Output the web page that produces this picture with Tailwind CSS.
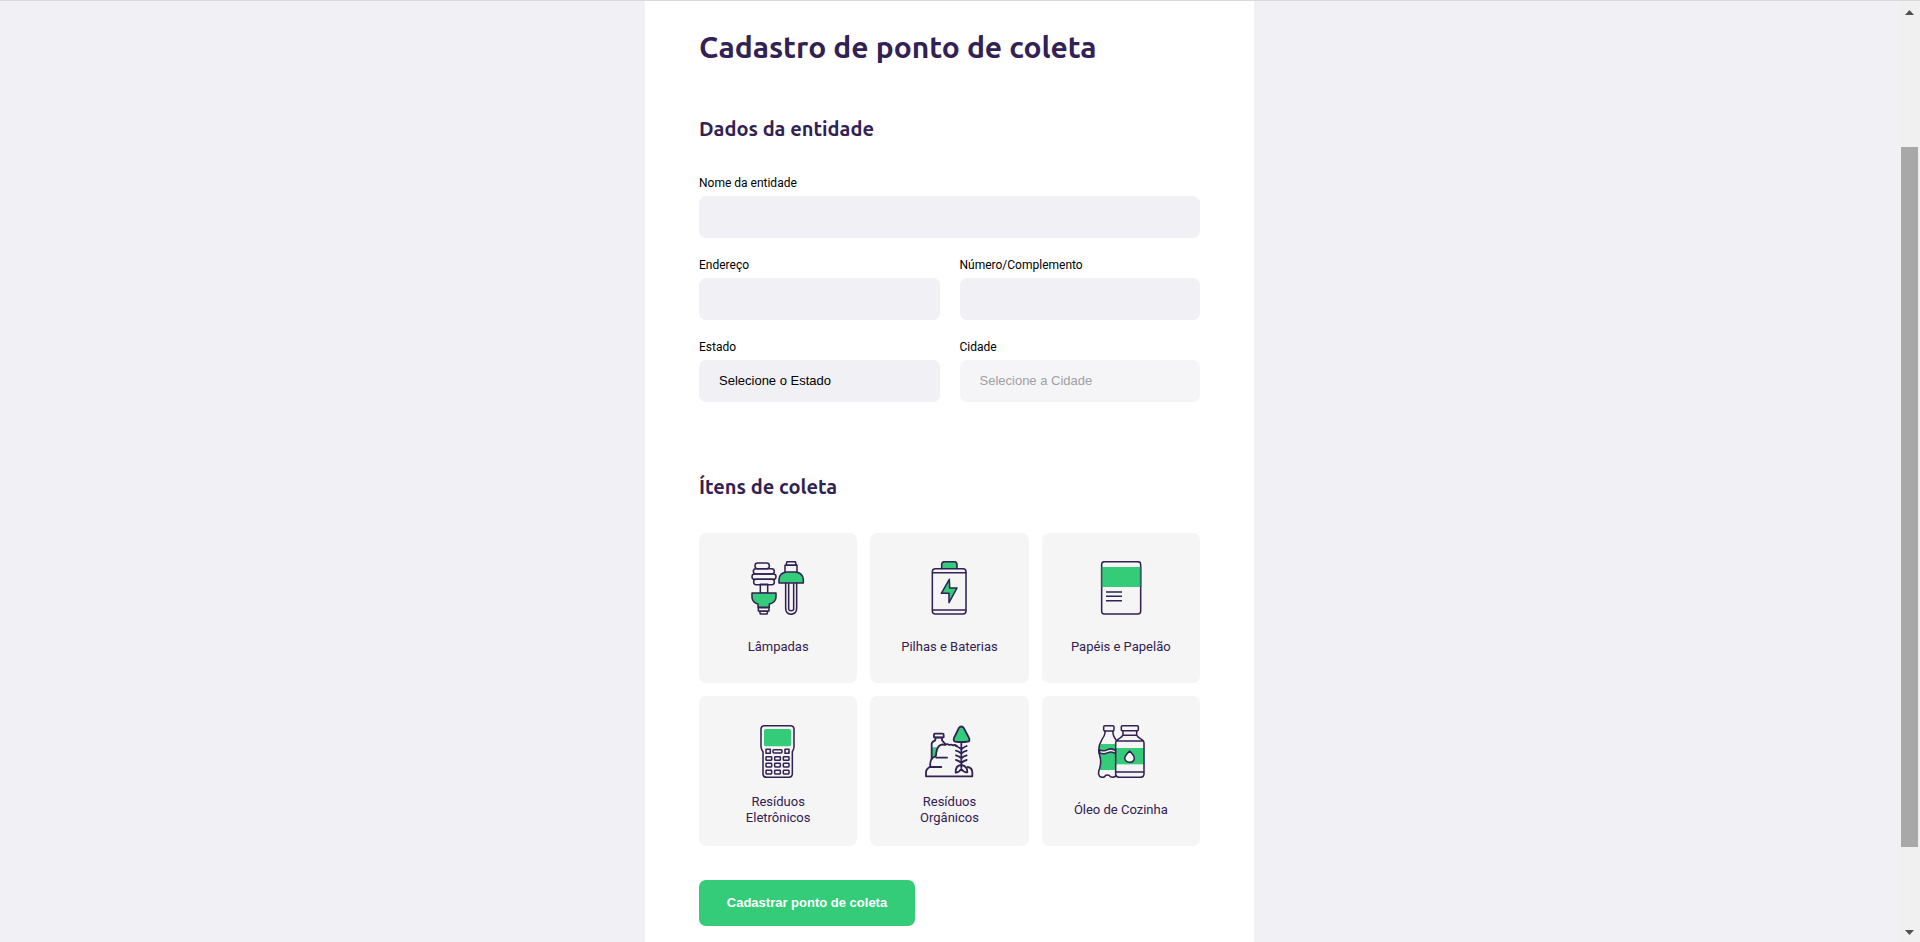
<!DOCTYPE html>
<html lang="pt-BR">
<head>
<meta charset="utf-8">
<meta name="viewport" content="width=device-width, initial-scale=1">
<title>Cadastro de ponto de coleta</title>
<script src="https://cdn.jsdelivr.net/npm/@tailwindcss/browser@4"></script>
</head>
<body class="flex h-screen overflow-hidden border-t border-[#d8d8df] bg-[#f0f0f5] font-['Roboto',sans-serif] text-[#322153]">
<main class="min-w-0 flex-1 overflow-hidden">
  <form class="mx-auto min-h-full max-w-[609px] bg-white px-[54px] pt-7 pb-[54px]">
    <h1 class="font-['Ubuntu','Noto_Sans',sans-serif] text-[30px] leading-9 font-bold">Cadastro de ponto de coleta</h1>

    <section class="mt-[52px]">
      <h2 class="font-['Ubuntu','Noto_Sans',sans-serif] text-[20px] leading-6 font-bold">Dados da entidade</h2>
      <div class="mt-[34px] grid grid-cols-2 gap-x-5 gap-y-[19px] text-black">
        <div class="col-span-2 flex flex-col gap-[5px]">
          <label for="name" class="text-xs">Nome da entidade</label>
          <input id="name" type="text" class="h-[42px] rounded-[7px] bg-[#f0f0f5] px-5 text-[13px]">
        </div>
        <div class="flex flex-col gap-[5px]">
          <label for="address" class="text-xs">Endereço</label>
          <input id="address" type="text" class="h-[42px] min-w-0 rounded-[7px] bg-[#f0f0f5] px-5 text-[13px]">
        </div>
        <div class="flex flex-col gap-[5px]">
          <label for="address2" class="text-xs">Número/Complemento</label>
          <input id="address2" type="text" class="h-[42px] min-w-0 rounded-[7px] bg-[#f0f0f5] px-5 text-[13px]">
        </div>
        <div class="flex flex-col gap-[5px]">
          <label for="uf" class="text-xs">Estado</label>
          <select id="uf" class="h-[42px] appearance-none rounded-[7px] bg-[#f0f0f5] px-5 font-['Liberation_Sans',sans-serif] text-[13px]">
            <option>Selecione o Estado</option>
          </select>
        </div>
        <div class="flex flex-col gap-[5px]">
          <label for="city" class="text-xs">Cidade</label>
          <select id="city" disabled class="h-[42px] appearance-none rounded-[7px] bg-[#f5f5f7] px-5 font-['Liberation_Sans',sans-serif] text-[13px] text-[#a0a0a2] opacity-100">
            <option>Selecione a Cidade</option>
          </select>
        </div>
      </div>
    </section>

    <section class="mt-[73px]">
      <h2 class="font-['Ubuntu','Noto_Sans',sans-serif] text-[20px] leading-6 font-bold">Ítens de coleta</h2>
      <ul class="mt-[34px] grid grid-cols-3 gap-[13px] text-[13px] leading-4">
        <li>
          <button type="button" class="flex h-[150px] w-full flex-col items-center rounded-[7px] bg-[#f5f5f5] pt-7">
            <svg class="size-[54px]" viewBox="63 33 162 162" fill="none" stroke="#322153" stroke-width="4.600" stroke-linejoin="round" stroke-linecap="round" aria-hidden="true">
              <rect x="91" y="103" width="22" height="27"/>
              <rect x="75" y="39" width="43" height="17" rx="8"/>
              <rect x="70" y="56" width="63" height="16" rx="8"/>
              <rect x="66" y="72" width="72" height="16" rx="8"/>
              <rect x="71" y="88" width="62" height="16" rx="7"/>
              <path d="M66 129H138V143Q136 158 118 162V172H84V162Q68 158 66 143Z" fill="#34cb79"/>
              <path d="M85 173H117V183H85ZM89 184H113L111 192H91Z"/>
              <path d="M168 45L171 35H196L199 45ZM165 66V46H201V66"/>
              <path d="M147 99V88Q149 68 170 66H196Q218 68 220 88V99Z" fill="#34cb79"/>
              <path d="M167 100V176Q168 192 183 193Q199 192 200 176V100M176 101V178Q177 182 183 182Q190 182 191 178V101"/>
            </svg>
            <span class="flex h-16 items-center">Lâmpadas</span>
          </button>
        </li>
        <li>
          <button type="button" class="flex h-[150px] w-full flex-col items-center rounded-[7px] bg-[#f5f5f5] pt-7">
            <svg class="size-[54px]" viewBox="37 33 162 162" fill="none" stroke="#322153" stroke-width="4.600" stroke-linejoin="round" stroke-linecap="round" aria-hidden="true">
              <path d="M96 56V42Q97 35 104 35H134Q141 35 142 42V56" fill="#34cb79"/>
              <rect x="68" y="56" width="101" height="136" rx="9"/>
              <path d="M69 68H168M69 180H168"/>
              <path d="M119 88L95 130H118V158L142 114H120Z" fill="#34cb79"/>
            </svg>
            <span class="flex h-16 items-center">Pilhas e Baterias</span>
          </button>
        </li>
        <li>
          <button type="button" class="flex h-[150px] w-full flex-col items-center rounded-[7px] bg-[#f5f5f5] pt-7">
            <svg class="size-[54px]" viewBox="42 33 162 162" fill="none" stroke="#322153" stroke-width="4.600" stroke-linecap="butt" aria-hidden="true">
              <rect x="65" y="35" width="117" height="157" rx="8"/>
              <path d="M64 51H183V111H64Z" fill="#34cb79" stroke="none"/>
              <path d="M65 51V111M182 51V111" stroke-opacity=".6"/>
              <path d="M78 126H126M78 139H126M78 152H126"/>
            </svg>
            <span class="flex h-16 items-center">Papéis e Papelão</span>
          </button>
        </li>
        <li>
          <button type="button" class="flex h-[150px] w-full flex-col items-center rounded-[7px] bg-[#f5f5f5] pt-7">
            <svg class="size-[54px]" viewBox="33 27 162 162" fill="none" stroke="#322153" stroke-width="4.600" stroke-linejoin="round" aria-hidden="true">
              <path d="M72 32H153Q162 33 162 42V96Q161 104 157 110V178Q156 186 148 187H79Q70 186 69 178V110Q64 104 63 96V42Q63 33 72 32Z"/>
              <rect x="72" y="42" width="81" height="52" rx="5" fill="#34cb79" stroke="none"/>
              <rect x="78" y="103" width="13" height="12"/><rect x="99" y="104" width="27" height="10" rx="3"/><rect x="135" y="103" width="12" height="12"/>
              <rect x="78" y="125" width="17" height="11" rx="2"/><rect x="104" y="125" width="17" height="11" rx="2"/><rect x="130" y="125" width="17" height="11" rx="2"/>
              <rect x="78" y="145" width="17" height="11" rx="2"/><rect x="104" y="145" width="17" height="11" rx="2"/><rect x="130" y="145" width="17" height="11" rx="2"/>
              <rect x="78" y="166" width="17" height="11" rx="2"/><rect x="104" y="166" width="17" height="11" rx="2"/><rect x="130" y="166" width="17" height="11" rx="2"/>
            </svg>
            <span class="flex h-16 items-center">Resíduos<br>Eletrônicos</span>
          </button>
        </li>
        <li>
          <button type="button" class="flex h-[150px] w-full flex-col items-center rounded-[7px] bg-[#f5f5f5] pt-7">
            <svg class="size-[54px]" viewBox="37 27 162 162" fill="none" stroke="#322153" stroke-width="5.400" stroke-linejoin="round" stroke-linecap="round" aria-hidden="true">
              <path d="M67 97H85L78 128L67 130Z" fill="#34cb79" stroke="none"/>
              <path d="M66 132V86Q67 80 77 76V68H97V76L107 87"/>
              <path d="M73 58Q73 56 76 56H99Q102 56 102 59V67H73Z"/>
              <path d="M141 93Q136 88 130 91Q125 87 119 90Q112 85 106 90Q96 86 88 93Q80 101 79 122L67 130Q60 138 62 155Q49 162 49 172V184H188V173Q188 158 174 156"/>
              <path d="M80 128H112M62 156H95"/>
              <path d="M147 40Q155 29 163 40L178 69Q182 79 174 80Q155 83 137 80Q130 78 133 69Z" fill="#34cb79"/>
              <path d="M155 82V158M139 93Q148 96 155 103Q162 96 171 93M139 107Q148 109 155 116Q162 109 171 107M139 121Q148 123 155 130Q162 123 171 121M139 135Q148 137 155 144Q162 137 171 135"/>
              <path d="M155 150Q137 151 138 173Q147 173 155 162Q163 173 173 172Q174 153 155 150Z"/>
            </svg>
            <span class="flex h-16 items-center">Resíduos<br>Orgânicos</span>
          </button>
        </li>
        <li>
          <button type="button" class="flex h-[150px] w-full flex-col items-center rounded-[7px] bg-[#f5f5f5] pt-7">
            <svg class="size-[54px]" viewBox="42 27 162 162" fill="none" stroke="#322153" stroke-width="4.600" stroke-linejoin="round" stroke-linecap="round" aria-hidden="true">
              <path d="M61 87H107V165H59Q64 145 57 121Q54 105 61 87Z" fill="#34cb79" stroke="none"/>
              <path d="M58 105Q72 110 83 104Q95 98 107 107V116Q95 108 84 113Q72 119 59 114Z" fill="#f5f5f5"/>
              <rect x="71" y="32" width="31" height="16" rx="4"/>
              <path d="M75 48V54Q74 62 66 73Q51 98 59 121Q65 140 59 160Q50 183 65 187Q74 188 77 181Q87 178 91 185Q99 189 108 183M99 48V54Q99 62 109 76"/>
              <path d="M108 99H191V148H108Z" fill="#34cb79" stroke="none"/>
              <rect x="124" y="32" width="51" height="15" rx="3"/>
              <path d="M129 48V59Q128 65 114 73Q107 77 107 83V178Q108 186 116 187H183Q191 186 192 178V83Q192 77 185 73Q171 66 170 59V48M130 61H169M110 78H189M108 171H191"/>
              <path d="M149 108Q135 122 134 129Q135 141 149 142Q163 141 163 129Q162 121 149 108Z" fill="#fff"/>
            </svg>
            <span class="flex h-16 items-center">Óleo de Cozinha</span>
          </button>
        </li>
      </ul>
    </section>

    <button type="submit" class="mt-[34px] block h-[46px] w-[216px] rounded-[7px] bg-[#34cb79] font-['Liberation_Sans',sans-serif] text-[13px] font-bold text-white">Cadastrar ponto de coleta</button>
  </form>
</main>

<div class="flex w-[21px] flex-none flex-col items-center bg-[#f0f0f0] pt-[9px] pb-[7px]" aria-hidden="true">
  <svg class="h-[5px] w-[9px]" viewBox="0 0 9 5" fill="#505050"><path d="M4.500 0L9 5H0Z"/></svg>
  <div class="flex w-full flex-1 flex-col px-0.5 pt-[132px] pb-[83px]">
    <div class="flex-1 bg-[#a8a8a8]"></div>
  </div>
  <svg class="h-[5px] w-[9px]" viewBox="0 0 9 5" fill="#505050"><path d="M4.500 5L9 0H0Z"/></svg>
</div>
</body>
</html>
